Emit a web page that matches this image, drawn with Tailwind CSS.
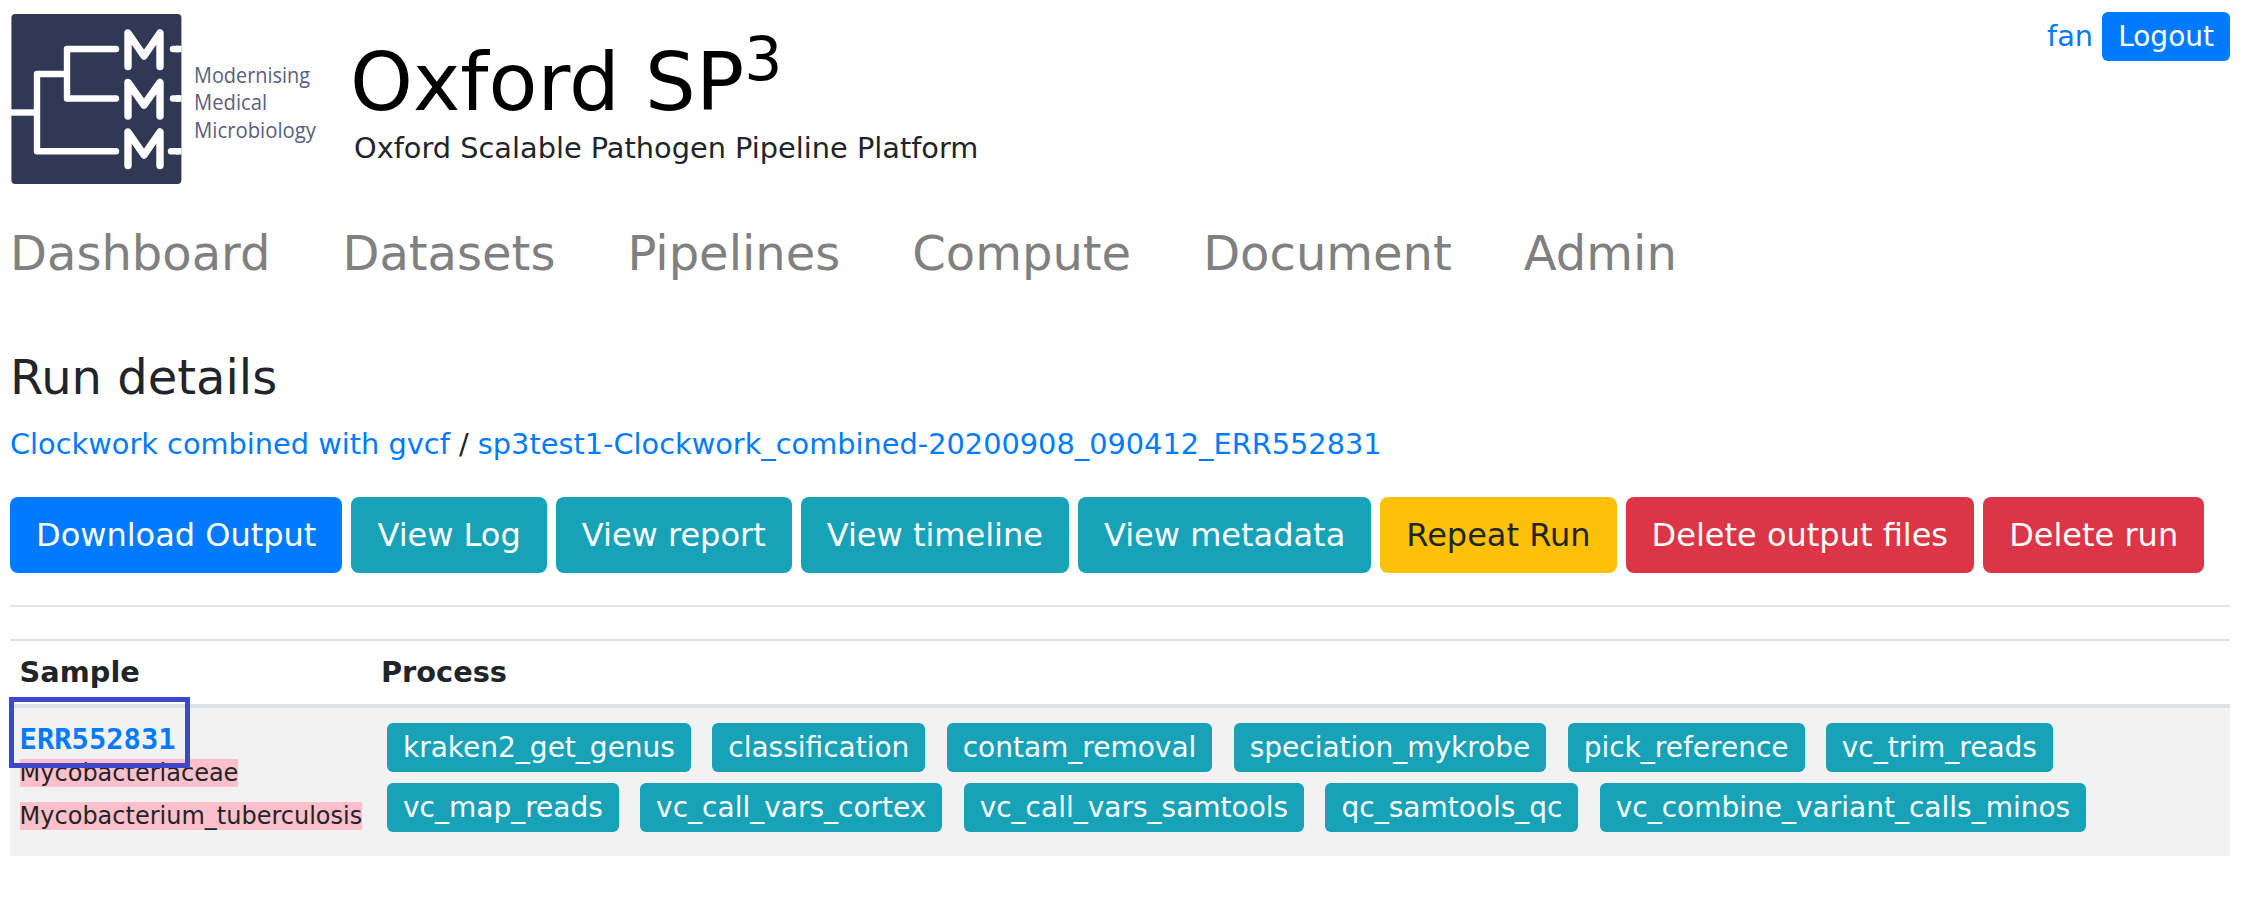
<!DOCTYPE html>
<html lang="en">
<head>
<meta charset="utf-8">
<title>Oxford SP3 - Run details</title>
<script src="https://cdn.jsdelivr.net/npm/@tailwindcss/browser@4"></script>
</head>
<body class="bg-white pl-[10px] pr-[26px] font-['DejaVu_Sans',sans-serif] text-[28.8px] text-[#212529]">
  <header class="flex h-[217px] items-start">
    <svg class="mt-[14px] ml-px h-[170px] w-[311px] shrink-0" viewBox="-1 0 311 170" fill="none">
      <rect x="-0.6" width="170" height="170" rx="4" fill="#303855"/>
      <g stroke="#fff" stroke-width="6.4" stroke-linecap="round" stroke-linejoin="round">
        <path stroke-linecap="butt" d="M-1 98.5H25"/>
        <path d="M104 137.3H25V60H55M104 35H55V84.5H104"/>
        <path d="M161 35H166M161 84.5H166M159 137.3H166"/>
        <path stroke-linecap="butt" d="M164 35H169.5M164 84.5H169.5M164 137.3H169.5"/>
      </g>
      <g stroke="#fff" stroke-width="7.4" stroke-linecap="round" stroke-linejoin="round">
        <path d="M116 52.5V19L132 42L148 19V52.5"/>
        <path d="M116 102V68.5L132 91L148 68.5V102"/>
        <path d="M116 151.5V118L132 141L148 118V151.5"/>
      </g>
      <g fill="#5a6180" font-family="Open Sans, sans-serif" font-size="21.5">
        <text x="182" y="68.5" textLength="116" lengthAdjust="spacingAndGlyphs">Modernising</text>
        <text x="182" y="96" textLength="73" lengthAdjust="spacingAndGlyphs">Medical</text>
        <text x="182" y="124" textLength="122" lengthAdjust="spacingAndGlyphs">Microbiology</text>
      </g>
    </svg>
    <div class="ml-[28px] pt-[35px]">
      <h1 class="h-[95px] text-[80px] leading-[96px] text-black">Oxford SP<sup class="-top-[30px] text-[60px]">3</sup></h1>
      <p class="pl-1 leading-[37px]">Oxford Scalable Pathogen Pipeline Platform</p>
    </div>
    <div class="ml-auto flex items-center gap-[9px] pt-3">
      <a class="leading-[49px] text-[#007bff]">fan</a>
      <a class="rounded-[6px] bg-[#007bff] px-4 text-[28px] leading-[49px] text-white">Logout</a>
    </div>
  </header>

  <nav class="flex gap-[72px] text-[48px] leading-[72px] text-[#808080]">
    <a>Dashboard</a><a>Datasets</a><a>Pipelines</a><a>Compute</a><a>Document</a><a>Admin</a>
  </nav>

  <h2 class="mt-[59px] text-[48px] leading-[58px]">Run details</h2>
  <p class="mt-[17px] leading-[43px]"><a class="text-[#007bff]">Clockwork combined with gvcf</a> / <a class="text-[#007bff]">sp3test1-Clockwork_combined-20200908_090412_ERR552831</a></p>

  <div class="mt-[31px] flex gap-[9.1px] text-[32px] leading-[76px] whitespace-nowrap text-white">
    <a class="rounded-[8px] bg-[#007bff] px-[26px]">Download Output</a>
    <a class="rounded-[8px] bg-[#17a2b8] px-[26px]">View Log</a>
    <a class="rounded-[8px] bg-[#17a2b8] px-[26px]">View report</a>
    <a class="rounded-[8px] bg-[#17a2b8] px-[26px]">View timeline</a>
    <a class="rounded-[8px] bg-[#17a2b8] px-[26px]">View metadata</a>
    <a class="rounded-[8px] bg-[#ffc107] px-[26px] text-[#212529]">Repeat Run</a>
    <a class="rounded-[8px] bg-[#dc3545] px-[26px]">Delete output files</a>
    <a class="rounded-[8px] bg-[#dc3545] px-[26px]">Delete run</a>
  </div>

  <div class="my-8 h-[2px] bg-[#e5e5e5]"></div>

  <section class="border-t-2 border-[#dee2e6]">
    <div class="grid h-[67px] grid-cols-[361.4px_1fr] border-b-4 border-[#dee2e6] pt-[10px] pl-[9.6px] leading-[43px] font-bold">
      <div>Sample</div>
      <div>Process</div>
    </div>
    <div class="relative grid h-[148px] grid-cols-[367.4px_1fr] bg-[#f2f2f2] pl-[9.6px]">
      <div class="pt-[17px]">
        <a class="block font-['DejaVu_Sans_Mono',monospace] leading-[28px] font-bold text-[#007bff]">ERR552831</a>
        <div class="flex flex-col gap-1 pt-px text-[24px] leading-[39px]">
          <div><span class="bg-[#ffc0cb]">Mycobacteriaceae</span></div>
          <div><span class="bg-[#ffc0cb]">Mycobacterium_tuberculosis</span></div>
        </div>
      </div>
      <div class="flex flex-col gap-[11px] pt-[15px] text-[28px] leading-[49px] text-white">
        <div class="flex gap-[21.3px]">
          <span class="rounded-[6px] bg-[#17a2b8] px-4">kraken2_get_genus</span>
          <span class="rounded-[6px] bg-[#17a2b8] px-4">classification</span>
          <span class="rounded-[6px] bg-[#17a2b8] px-4">contam_removal</span>
          <span class="rounded-[6px] bg-[#17a2b8] px-4">speciation_mykrobe</span>
          <span class="rounded-[6px] bg-[#17a2b8] px-4">pick_reference</span>
          <span class="rounded-[6px] bg-[#17a2b8] px-4">vc_trim_reads</span>
        </div>
        <div class="flex gap-[21.3px]">
          <span class="rounded-[6px] bg-[#17a2b8] px-4">vc_map_reads</span>
          <span class="rounded-[6px] bg-[#17a2b8] px-4">vc_call_vars_cortex</span>
          <span class="rounded-[6px] bg-[#17a2b8] px-4">vc_call_vars_samtools</span>
          <span class="rounded-[6px] bg-[#17a2b8] px-4">qc_samtools_qc</span>
          <span class="rounded-[6px] bg-[#17a2b8] px-4">vc_combine_variant_calls_minos</span>
        </div>
      </div>
      <!-- highlight frame over the sample link -->
      <div class="absolute -top-[11px] -left-px h-[71px] w-[181px] border-5 border-[#3f48cc]"></div>
    </div>
  </section>
</body>
</html>
